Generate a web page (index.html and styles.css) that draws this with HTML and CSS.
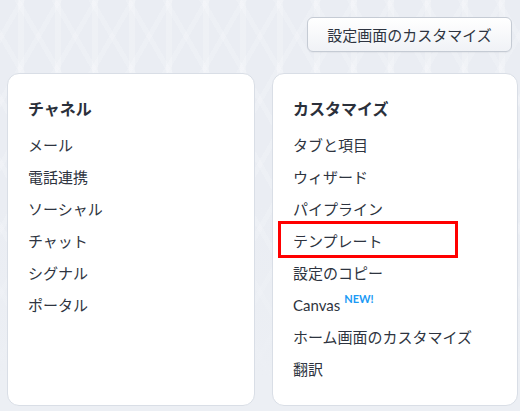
FILE: index.html
```html
<!DOCTYPE html>
<html lang="ja">
<head>
<meta charset="utf-8">
<title>設定</title>
<link rel="stylesheet" href="styles.css">
</head>
<body>
<div class="page">
  <div class="toolbar">
    <button class="btn">設定画面のカスタマイズ</button>
  </div>
  <div class="cards">
    <section class="card">
      <h2 class="card-title">チャネル</h2>
      <ul class="menu">
        <li class="menu-item">メール</li>
        <li class="menu-item">電話連携</li>
        <li class="menu-item">ソーシャル</li>
        <li class="menu-item">チャット</li>
        <li class="menu-item">シグナル</li>
        <li class="menu-item">ポータル</li>
      </ul>
    </section>
    <section class="card">
      <h2 class="card-title">カスタマイズ</h2>
      <ul class="menu">
        <li class="menu-item">タブと項目</li>
        <li class="menu-item">ウィザード</li>
        <li class="menu-item">パイプライン</li>
        <li class="menu-item highlighted">テンプレート<span class="mark"></span></li>
        <li class="menu-item">設定のコピー</li>
        <li class="menu-item">Canvas<sup class="new">NEW!</sup></li>
        <li class="menu-item">ホーム画面のカスタマイズ</li>
        <li class="menu-item">翻訳</li>
      </ul>
    </section>
  </div>
</div>
</body>
</html>
```
FILE: styles.css
```css
* { box-sizing: border-box; }
html, body {
  margin: 0;
  padding: 0;
  height: 100%;
}
body {
  background-color: #eaedf3;
  background-image:
    linear-gradient(rgba(236,239,244,0) 0, rgba(236,239,244,0) 200px, #eceff4 380px),
    repeating-linear-gradient(90deg, transparent 0 18px, rgba(255,255,255,0.2) 18px 24px, transparent 24px 37px),
    repeating-linear-gradient(60deg, transparent 0 26px, rgba(255,255,255,0.16) 26px 31px, transparent 31px 32px),
    repeating-linear-gradient(-60deg, transparent 0 26px, rgba(255,255,255,0.16) 26px 31px, transparent 31px 32px);
  font-family: "Lato", "Noto Sans CJK JP", sans-serif;
  color: #2e3440;
  overflow: hidden;
}
.page {
  padding: 17px 8px 0 7px;
  height: 100%;
  display: flex;
  flex-direction: column;
}
.toolbar {
  display: flex;
  justify-content: flex-end;
}
.btn {
  height: 35px;
  width: 205px;
  padding: 0;
  border: 1px solid #c5cbd4;
  border-radius: 6px;
  background: linear-gradient(#ffffff, #f0f2f6);
  font-family: "Noto Sans CJK JP", sans-serif;
  font-size: 15px;
  color: #2e3440;
  box-shadow: 0 1px 1px rgba(0,0,0,0.04);
}
.cards {
  margin-top: 21px;
  margin-right: -6px;
  display: grid;
  grid-template-columns: 248px 246px;
  column-gap: 17px;
  height: 333px;
}
.card {
  background: #ffffff;
  border: 1px solid #d9dee6;
  border-radius: 12px;
  padding: 19px 20px 0 20px;
}
.card-title {
  margin: 0 0 4px 0;
  font-size: 16px;
  font-weight: 700;
  line-height: 32px;
  color: #2b303b;
}
.menu {
  list-style: none;
  margin: 0;
  padding: 0;
}
.menu-item {
  position: relative;
  font-size: 15px;
  line-height: 32px;
  height: 32px;
  white-space: nowrap;
}
.mark {
  position: absolute;
  left: -15px;
  top: -4px;
  width: 180px;
  height: 37px;
  border: 3px solid #ff0000;
}
.new {
  font-family: "Lato", sans-serif;
  font-size: 11px;
  font-weight: 700;
  color: #1b9af5;
  margin-left: 4px;
  vertical-align: 8px;
  line-height: 0;
}
```
